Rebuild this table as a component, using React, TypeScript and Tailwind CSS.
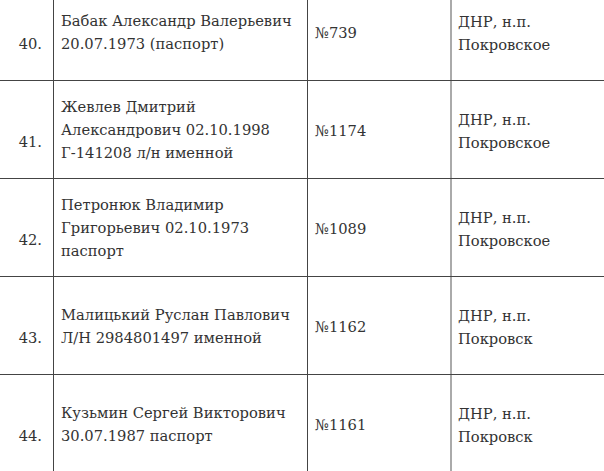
const rows = [
  { n: '40.', name: ['Бабак Александр Валерьевич', '20.07.1973 (паспорт)'], num: '№739', place: 'Покровское' },
  { n: '41.', name: ['Жевлев Дмитрий', 'Александрович 02.10.1998', 'Г-141208 л/н именной'], num: '№1174', place: 'Покровское' },
  { n: '42.', name: ['Петронюк Владимир', 'Григорьевич 02.10.1973', 'паспорт'], num: '№1089', place: 'Покровское' },
  { n: '43.', name: ['Малицький Руслан Павлович', 'Л/Н 2984801497 именной'], num: '№1162', place: 'Покровск' },
  { n: '44.', name: ['Кузьмин Сергей Викторович', '30.07.1987 паспорт'], num: '№1161', place: 'Покровск' },
]

export default function App() {
  return (
    <div className="w-[604px] h-[471px] overflow-hidden bg-white text-[#333] text-[14.7px] leading-[23px] font-['DejaVu_Serif','Liberation_Serif',serif]">
      <div className="-mt-[17px]">
        {rows.map((r) => (
          <div
            key={r.n}
            className="grid grid-cols-[53px_254px_143px_160px] h-[98px] border-b border-[#444]"
          >
            <div className="flex items-center justify-end pr-[11px] pt-[24px]">{r.n}</div>
            <div className="flex flex-col justify-center border-l border-[#444] pl-[7px]">
              {r.name.map((l) => (
                <div key={l} className="whitespace-nowrap">{l}</div>
              ))}
            </div>
            <div className="flex items-center border-l border-[#444] pl-[7px] pt-[2px]">{r.num}</div>
            <div className="flex flex-col justify-center border-l-2 border-[#aaa] pl-[6px] pt-[2px]">
              <div>ДНР, н.п.</div>
              <div>{r.place}</div>
            </div>
          </div>
        ))}
      </div>
    </div>
  )
}
